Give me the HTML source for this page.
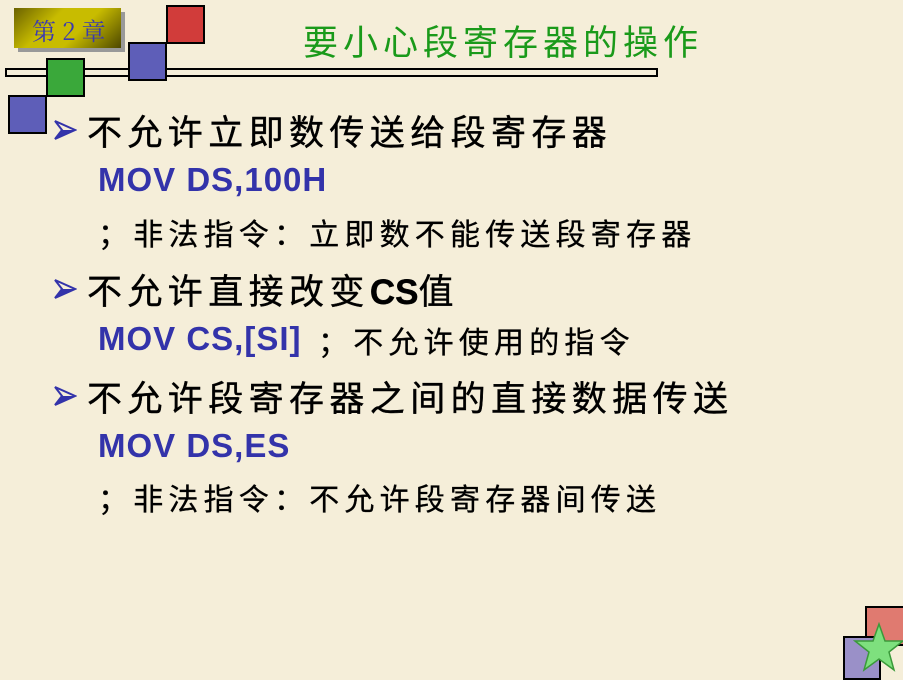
<!DOCTYPE html>
<html><head><meta charset="utf-8"><style>
body{margin:0;width:903px;height:678px;background:#f5eed9;position:relative;overflow:hidden;font-family:"Liberation Sans","Noto Sans CJK SC",sans-serif}
.a{position:absolute;white-space:nowrap}
.sq{position:absolute;border:2px solid #000;box-sizing:border-box}
.t{font-size:35px;letter-spacing:5.4px;color:#000;-webkit-text-stroke:0.4px #000}
.m{font-size:33px;color:#3333aa;font-weight:bold;letter-spacing:1px}
.c{font-size:30px;letter-spacing:5.2px;color:#000;-webkit-text-stroke:0.3px #000}
</style></head><body>
<div class="a" style="left:14px;top:8px;width:107px;height:40px;background:linear-gradient(135deg,#6b6200 0%,#c8bc00 35%,#c8bc00 60%,#4d4700 100%);box-shadow:4px 4px 0 #999"></div>
<div class="a" style="left:32px;top:12px;font-size:24px;color:#3a3ab0;font-family:'Noto Serif CJK SC',serif">第 2 章</div>
<div class="a" style="left:5px;top:68px;width:653px;height:9px;border:2px solid #000;box-sizing:border-box"></div>
<div class="sq" style="left:166px;top:5px;width:39px;height:39px;background:#d13c3a"></div>
<div class="sq" style="left:128px;top:42px;width:39px;height:39px;background:#5e5eb8"></div>
<div class="sq" style="left:46px;top:58px;width:39px;height:39px;background:#3aa83a"></div>
<div class="sq" style="left:8px;top:95px;width:39px;height:39px;background:#5e5eb8"></div>
<div class="a" style="left:303px;top:15px;font-size:35px;letter-spacing:5px;color:#1a9a1a">要小心段寄存器的操作</div>
<svg class="a" style="left:53px;top:118px" width="24" height="24" viewBox="0 0 24 24"><path d="M2 3L22 12L2 21L9 12Z" fill="none" stroke="#3333aa" stroke-width="2"/><path d="M9 12L22 12L2 21Z" fill="#3333aa"/></svg>
<div class="a t" style="left:87px;top:105px">不允许立即数传送给段寄存器</div>
<div class="a m" style="left:98px;top:161px">MOV DS,100H</div>
<div class="a c" style="left:98px;top:210px">；非法指令：立即数不能传送段寄存器</div>
<svg class="a" style="left:53px;top:277px" width="24" height="24" viewBox="0 0 24 24"><path d="M2 3L22 12L2 21L9 12Z" fill="none" stroke="#3333aa" stroke-width="2"/><path d="M9 12L22 12L2 21Z" fill="#3333aa"/></svg>
<div class="a t" style="left:87px;top:264px">不允许直接改变<b style="letter-spacing:0">CS</b>值</div>
<div class="a m" style="left:98px;top:320px">MOV CS,[SI]</div>
<div class="a c" style="left:318px;top:318px">；不允许使用的指令</div>
<svg class="a" style="left:53px;top:384px" width="24" height="24" viewBox="0 0 24 24"><path d="M2 3L22 12L2 21L9 12Z" fill="none" stroke="#3333aa" stroke-width="2"/><path d="M9 12L22 12L2 21Z" fill="#3333aa"/></svg>
<div class="a t" style="left:87px;top:371px">不允许段寄存器之间的直接数据传送</div>
<div class="a m" style="left:98px;top:427px">MOV DS,ES</div>
<div class="a c" style="left:98px;top:475px">；非法指令：不允许段寄存器间传送</div>
<div class="sq" style="left:865px;top:606px;width:40px;height:40px;background:#e07a70"></div>
<div class="sq" style="left:843px;top:636px;width:38px;height:44px;background:#9a90c8"></div>
<svg class="a" style="left:853px;top:622px" width="52" height="52" viewBox="0 0 52 52"><path d="M26 2L32 19L50 19L36 30L41 48L26 37L11 48L16 30L2 19L20 19Z" fill="#7ee07e" stroke="#3a9a3a" stroke-width="1.5"/></svg>
</body></html>
